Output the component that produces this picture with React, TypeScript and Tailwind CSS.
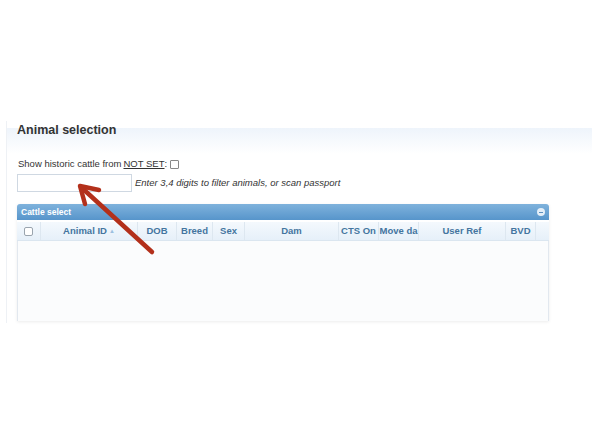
import React from 'react';

const columns: { label: string; width: number }[] = [
  { label: 'Animal ID', width: 97 },
  { label: 'DOB', width: 39 },
  { label: 'Breed', width: 36 },
  { label: 'Sex', width: 32 },
  { label: 'Dam', width: 94 },
  { label: 'CTS On', width: 40 },
  { label: 'Move da', width: 40 },
  { label: 'User Ref', width: 87 },
  { label: 'BVD', width: 30 },
];

const App: React.FC = () => {
  return (
    <div className="relative w-[592px] h-[444px] bg-white overflow-hidden font-['Liberation_Sans',Arial,sans-serif] text-[#333]">
      <div className="pt-[121px] pl-[6px]">
        {/* section */}
        <div className="relative border-l border-[#eef1f5] h-[202px]">
          <div className="absolute left-0 right-0 top-[7px] h-[26px] bg-gradient-to-b from-[#eef4fb] to-white" />
          <div className="relative">
            <h2 className="pl-[10px] text-[12.5px] font-bold leading-[18px] text-[#333]">Animal selection</h2>

            <div className="mt-[19px] pl-[11px] flex items-center text-[9.5px] leading-[12px]">
              <span>Show historic cattle from </span>
              <span className="underline ml-[2px]">NOT SET</span>
              <span>:</span>
              <span className="ml-[3px] w-[9px] h-[9px] border border-[#888] rounded-[1px] bg-white" />
            </div>

            <div className="mt-[4px] pl-[10px] flex items-center">
              <div className="w-[115px] h-[18px] border border-[#cfd8e2] bg-white" />
              <span className="ml-[3px] text-[9.5px] italic text-[#333]">Enter 3,4 digits to filter animals, or scan passport</span>
            </div>

            {/* cattle select panel */}
            <div className="mt-[12px] ml-[10px] w-[532px] shadow-[0_1px_3px_rgba(0,0,0,0.08)]">
              <div className="h-[16px] rounded-t-[3px] bg-gradient-to-b from-[#7fb2dc] to-[#5795cb] flex items-center justify-between px-[4px]">
                <span className="text-white font-bold text-[8.5px]">Cattle select</span>
                <span className="w-[8px] h-[8px] rounded-full bg-[#e3eef8] flex items-center justify-center">
                  <span className="w-[4px] h-[1px] bg-[#5b8fbf]" />
                </span>
              </div>
              <div className="flex h-[19px] mt-[2px] bg-gradient-to-b from-[#f4f9fd] to-[#e6f0f9] border-b border-[#dbe6f0] text-[9.5px] font-bold text-[#44759f]">
                <div className="w-[24px] flex items-center justify-center border-r border-[#dde7f0]">
                  <span className="w-[9px] h-[9px] border border-[#9aa4ae] rounded-[2px] bg-white" />
                </div>
                {columns.map((c) => (
                  <div
                    key={c.label}
                    className="flex items-center justify-center border-r border-[#dde7f0] whitespace-nowrap overflow-hidden"
                    style={{ width: c.width }}
                  >
                    {c.label}
                    {c.label === 'Animal ID' && <span className="ml-[2px] text-[6px] text-[#9cc0df]">▲</span>}
                  </div>
                ))}
                <div className="flex-1" />
              </div>
              <div className="h-[80px] bg-[#fbfcfd] border-x border-[#e2e8ef]" />
            </div>
          </div>
        </div>
      </div>

      {/* annotation arrow */}
      <svg className="absolute left-0 top-0 pointer-events-none" width="592" height="444">
        <g stroke="#b3301b" strokeWidth="4.5" strokeLinecap="round" strokeLinejoin="round" fill="none">
          <line x1="152" y1="252" x2="82" y2="188" />
          <polyline points="85,204 80,186 99,190" />
        </g>
      </svg>
    </div>
  );
};

export default App;
